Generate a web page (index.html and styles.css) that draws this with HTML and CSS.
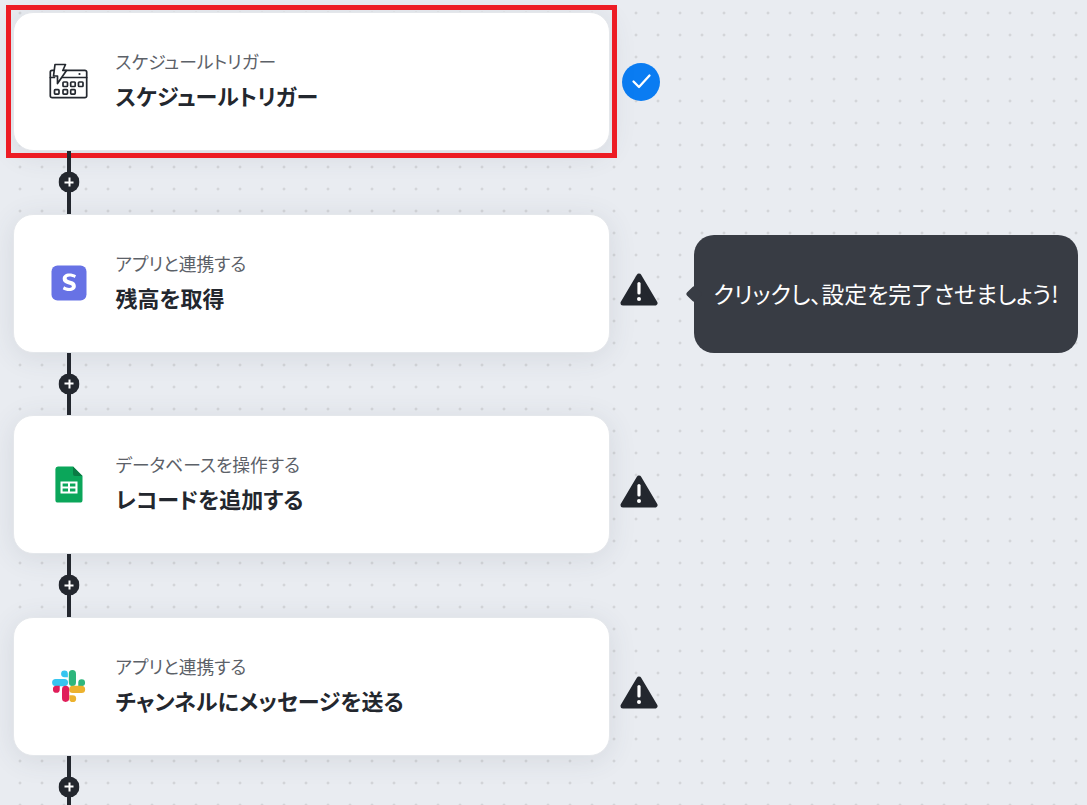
FILE: index.html
```html
<!DOCTYPE html>
<html lang="ja">
<head>
<meta charset="utf-8">
<title>フロー</title>
<link rel="stylesheet" href="styles.css">
</head>
<body>
<main class="flow">
  <section class="step">
    <div class="card card-selected">
      <span class="app-icon">
        <svg viewBox="0 0 40 40" width="40" height="40" fill="none" stroke="#23272e" stroke-width="1.7" stroke-linejoin="round" stroke-linecap="round">
          <path d="M5 8.3H3.1A1.8 1.8 0 0 0 1.3 10.1V33.9A1.8 1.8 0 0 0 3.1 35.7H35.9A1.8 1.8 0 0 0 37.7 33.9V10.1A1.8 1.8 0 0 0 35.9 8.3H15.5"/>
          <path d="M1.3 15.5H5.5M12 15.5H37.7"/>
          <path d="M6 2.5H16.5L13.8 8.5H17.5L8.5 21.5V14H4.5Z" fill="#fff"/>
          <circle cx="30.5" cy="12" r="1.1" fill="#23272e" stroke="none"/>
          <rect x="14" y="20" width="4.5" height="4.5" rx="0.8"/>
          <rect x="21.7" y="20" width="4.5" height="4.5" rx="0.8"/>
          <rect x="29.5" y="20" width="4.5" height="4.5" rx="0.8"/>
          <rect x="5.5" y="27.6" width="4.5" height="4.5" rx="0.8"/>
          <rect x="14" y="27.6" width="4.5" height="4.5" rx="0.8"/>
          <rect x="21.7" y="27.6" width="4.5" height="4.5" rx="0.8"/>
        </svg>
      </span>
      <div class="card-text">
        <p class="card-label">スケジュールトリガー</p>
        <p class="card-title">スケジュールトリガー</p>
      </div>
    </div>
    <span class="status">
      <svg viewBox="0 0 38 38" width="38" height="38"><circle cx="19" cy="19" r="19" fill="#0a7cf2"/><path d="M11.5 18.5L17 24L27.5 12.5" fill="none" stroke="#fff" stroke-width="2.3" stroke-linecap="round" stroke-linejoin="round"/></svg>
    </span>
  </section>

  <div class="connector"><span class="plus"></span></div>

  <section class="step">
    <div class="card">
      <span class="app-icon">
        <svg viewBox="0 0 36 36" width="36" height="36"><rect width="35" height="35" y="0.5" x="0.5" rx="6" fill="#6772e5"/><path transform="translate(1.8 1.9) scale(0.9)" d="M24.4 12.4C22.6 11.4 20.4 10.8 18.6 10.8C16.4 10.8 15.4 11.6 15.4 12.8C15.4 15.8 25.6 14.2 25.6 21.2C25.6 24.8 22.6 26.9 18.1 26.9C15.6 26.9 13 26.2 11 24.9L12.6 21.6C14.4 22.8 16.4 23.4 18.1 23.4C20.1 23.4 21.2 22.8 21.2 21.6C21.2 18.6 11 20.2 11 13.4C11 9.6 14 7.4 18.4 7.4C21 7.4 23.6 8 25.8 9.2Z" fill="#fff"/></svg>
      </span>
      <div class="card-text">
        <p class="card-label">アプリと連携する</p>
        <p class="card-title">残高を取得</p>
      </div>
    </div>
    <span class="status status-warn">
      <svg class="warn" viewBox="0 0 38 34" width="38" height="34"><path d="M19 3L35 30H3Z" fill="#23272e" stroke="#23272e" stroke-width="5" stroke-linejoin="round"/><rect x="17.4" y="9" width="3.2" height="12.5" rx="1.6" fill="#fff"/><circle cx="19" cy="26" r="2" fill="#fff"/></svg>
    </span>
    <div class="tooltip">クリックし、設定を完了させましょう!</div>
  </section>

  <div class="connector"><span class="plus"></span></div>

  <section class="step">
    <div class="card">
      <span class="app-icon">
        <svg viewBox="0 0 28 37" width="28" height="37"><path d="M3 0.5H18L27.5 10V34A2.6 2.6 0 0 1 24.9 36.6H3A2.6 2.6 0 0 1 0.4 34V3A2.6 2.6 0 0 1 3 0.5Z" fill="#0ba65a"/><path d="M18 0.5L27.5 10H20A2 2 0 0 1 18 8Z" fill="#0a7a44"/><path d="M5.5 15.5H22.5V27.5H5.5ZM7.6 17.4V20.5H13V17.4ZM15 17.4V20.5H20.4V17.4ZM7.6 22.5V25.6H13V22.5ZM15 22.5V25.6H20.4V22.5Z" fill="#fff" fill-rule="evenodd"/></svg>
      </span>
      <div class="card-text">
        <p class="card-label">データベースを操作する</p>
        <p class="card-title">レコードを追加する</p>
      </div>
    </div>
    <span class="status status-warn">
      <svg class="warn" viewBox="0 0 38 34" width="38" height="34"><path d="M19 3L35 30H3Z" fill="#23272e" stroke="#23272e" stroke-width="5" stroke-linejoin="round"/><rect x="17.4" y="9" width="3.2" height="12.5" rx="1.6" fill="#fff"/><circle cx="19" cy="26" r="2" fill="#fff"/></svg>
    </span>
  </section>

  <div class="connector"><span class="plus"></span></div>

  <section class="step">
    <div class="card">
      <span class="app-icon">
        <svg viewBox="0 0 36 36" width="34" height="34">
          <path d="M13.2 1.5a3.6 3.6 0 1 0 0 7.2h3.6V5.1a3.6 3.6 0 0 0-3.6-3.6ZM13.2 10.6H3.9a3.8 3.8 0 1 0 0 7.6h9.3a3.8 3.8 0 1 0 0-7.6Z" fill="#36c5f0"/>
          <path d="M35 14.4a3.6 3.6 0 1 0-7.2 0v3.8h3.6a3.6 3.6 0 0 0 3.6-3.8ZM25.4 14.4V4.9a3.8 3.8 0 1 0-7.6 0v9.5a3.8 3.8 0 1 0 7.6 0Z" fill="#2eb67d"/>
          <path d="M22 35a3.6 3.6 0 1 0 0-7.2h-3.6v3.6A3.6 3.6 0 0 0 22 35ZM22 25.4h9.3a3.8 3.8 0 1 0 0-7.6H22a3.8 3.8 0 1 0 0 7.6Z" fill="#ecb22e"/>
          <path d="M1 21.6a3.6 3.6 0 1 0 7.2 0v-3.8H4.6A3.6 3.6 0 0 0 1 21.6ZM10.6 21.6v9.5a3.8 3.8 0 1 0 7.6 0v-9.5a3.8 3.8 0 1 0-7.6 0Z" fill="#e01e5a"/>
        </svg>
      </span>
      <div class="card-text">
        <p class="card-label">アプリと連携する</p>
        <p class="card-title">チャンネルにメッセージを送る</p>
      </div>
    </div>
    <span class="status status-warn">
      <svg class="warn" viewBox="0 0 38 34" width="38" height="34"><path d="M19 3L35 30H3Z" fill="#23272e" stroke="#23272e" stroke-width="5" stroke-linejoin="round"/><rect x="17.4" y="9" width="3.2" height="12.5" rx="1.6" fill="#fff"/><circle cx="19" cy="26" r="2" fill="#fff"/></svg>
    </span>
  </section>

  <div class="connector"><span class="plus"></span></div>
</main>
</body>
</html>
```

FILE: styles.css
```css
* { box-sizing: border-box; }

html, body {
  height: 100%;
  margin: 0;
}

body {
  overflow: hidden;
  background-color: #e9ecf1;
  background-image: radial-gradient(circle, #d3d5d9 1.3px, transparent 1.7px);
  background-size: 22px 22px;
  background-position: 9px 2px;
  font-family: "Noto Sans CJK JP", "Noto Sans", sans-serif;
  font-feature-settings: "palt";
  color: #23272e;
}

.flow {
  display: flex;
  flex-direction: column;
  padding: 12px 0 0 13px;
}

.step {
  display: flex;
  align-items: center;
  height: 139px;
}

.card {
  position: relative;
  display: flex;
  align-items: center;
  width: 597px;
  height: 100%;
  padding-left: 34.5px;
  background: #fff;
  border: 1px solid #e4e7eb;
  border-radius: 20px;
  box-shadow: 0 4px 28px rgba(60, 70, 90, 0.11);
}

.card-selected::after {
  content: "";
  position: absolute;
  inset: -8px;
  border: 5px solid #ed1c24;
}

.app-icon {
  display: flex;
  align-items: center;
  justify-content: center;
  width: 40px;
  height: 40px;
  margin-right: 27px;
}

.card-text {
  display: flex;
  flex-direction: column;
  gap: 6px;
  padding-bottom: 3px;
}

.card-label {
  margin: 0;
  font-size: 17.8px;
  line-height: 24px;
  color: #5c6168;
}

.card-title {
  margin: 0;
  font-size: 22px;
  line-height: 32px;
  font-weight: 700;
}

.status {
  display: flex;
  align-items: center;
  justify-content: center;
  width: 38px;
  margin-left: 12px;
}

.status-warn {
  margin-left: 10px;
  padding-top: 14px;
}

.tooltip {
  position: relative;
  display: flex;
  align-items: center;
  justify-content: center;
  width: 384px;
  height: 118px;
  margin-left: 36px;
  margin-top: 21px;
  background: #383c44;
  border-radius: 20px;
  color: #fff;
  font-size: 22.8px;
}

.tooltip::before {
  content: "";
  position: absolute;
  left: -6px;
  top: 53px;
  width: 12px;
  height: 12px;
  background: #383c44;
  transform: rotate(45deg);
  border-radius: 2px;
}

.connector {
  position: relative;
  width: 4px;
  height: 62.5px;
  margin-left: 54px;
  background: #23272e;
}

.plus {
  position: absolute;
  left: 50%;
  top: 50%;
  width: 21px;
  height: 21px;
  transform: translate(-50%, -50%);
  border-radius: 50%;
  background-color: #23272e;
  background-image:
    linear-gradient(#fff, #fff),
    linear-gradient(#fff, #fff);
  background-size: 9px 2px, 2px 9px;
  background-position: center;
  background-repeat: no-repeat;
}
```
